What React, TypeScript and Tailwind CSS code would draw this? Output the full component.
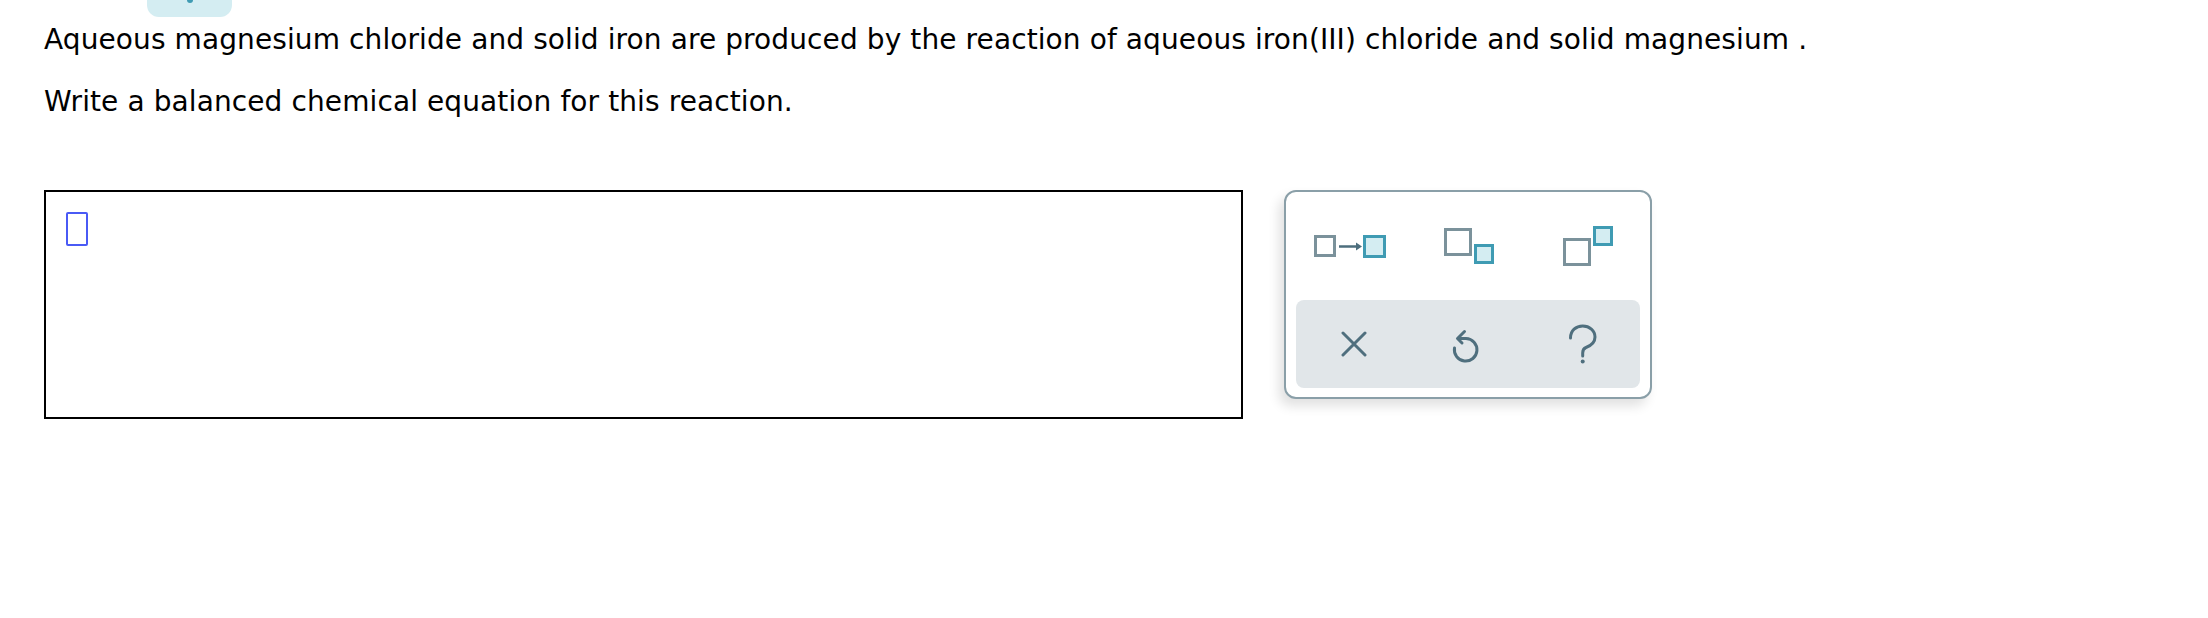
import React from "react";

const GRAY = "#7b929b";
const TEAL = "#3f9bb3";
const TEAL_FILL = "#d4edf2";
const ICON = "#4f6f7e";

function ArrowIcon() {
  return (
    <svg width="73" height="23" viewBox="0 0 73 23">
      <rect x="1.5" y="1.5" width="19" height="19" fill="none" stroke={GRAY} strokeWidth="3" />
      <line x1="25" y1="11.5" x2="43" y2="11.5" stroke="#4d6e7d" strokeWidth="2.5" />
      <polygon points="42,7.5 48,11.5 42,15.5" fill="#4d6e7d" />
      <rect x="50.5" y="1.5" width="20" height="20" fill={TEAL_FILL} stroke={TEAL} strokeWidth="3" />
    </svg>
  );
}

function SubscriptIcon() {
  return (
    <svg width="50" height="36" viewBox="0 0 50 36">
      <rect x="1.5" y="1.5" width="25" height="25" fill="none" stroke={GRAY} strokeWidth="3" />
      <rect x="31.5" y="17.5" width="17" height="17" fill={TEAL_FILL} stroke={TEAL} strokeWidth="3" />
    </svg>
  );
}

function SuperscriptIcon() {
  return (
    <svg width="50" height="40" viewBox="0 0 50 40">
      <rect x="31.5" y="1.5" width="17" height="17" fill={TEAL_FILL} stroke={TEAL} strokeWidth="3" />
      <rect x="1.5" y="13.5" width="25" height="25" fill="none" stroke={GRAY} strokeWidth="3" />
    </svg>
  );
}

function CloseIcon() {
  return (
    <svg width="26" height="26" viewBox="0 0 26 26">
      <path d="M2 2 L24 24 M24 2 L2 24" stroke={ICON} strokeWidth="3" strokeLinecap="round" fill="none" />
    </svg>
  );
}

function UndoIcon() {
  return (
    <svg width="60" height="52" viewBox="0 0 60 52">
      <path
        d="M16.5 30 A11.3 11.3 0 1 0 28 20.5 H20 M26.5 13.5 L19.5 20.5 L24 25"
        stroke={ICON}
        strokeWidth="3"
        strokeLinecap="round"
        strokeLinejoin="round"
        fill="none"
      />
    </svg>
  );
}

function HelpIcon() {
  return (
    <svg width="34" height="46" viewBox="0 0 34 46">
      <path
        d="M4.5 17 C4.5 9.5 10 5 16.7 5 C23.5 5 29 9.5 29 16 C29 22 24 25 20 26.5 C17.5 27.5 16.7 29 16.7 32 V35"
        stroke={ICON}
        strokeWidth="3"
        strokeLinecap="round"
        fill="none"
      />
      <circle cx="16.7" cy="40.5" r="2" fill={ICON} />
    </svg>
  );
}

export default function App() {
  return (
    <div className="min-h-[618px] bg-white pl-[44px] text-black font-['DejaVu_Sans',sans-serif]">
      {/* tab peeking at the top */}
      <div className="ml-[103px] flex h-[17px] w-[85px] justify-center rounded-b-[12px] bg-[#d4edf2]">
        <div className="h-[3px] w-[6px] rounded-b-full bg-[#3f9bb3]" />
      </div>

      <p className="mt-[7px] text-[28px] leading-[32px] tracking-[0.1px]">
        Aqueous magnesium chloride and solid iron are produced by the reaction of aqueous iron(III) chloride and solid magnesium .
      </p>
      <p className="mt-[30px] text-[28px] leading-[32px] tracking-[0.1px]">
        Write a balanced chemical equation for this reaction.
      </p>

      <div className="mt-[72px] flex items-start">
        {/* answer box */}
        <div className="h-[229px] w-[1199px] border-2 border-black pl-[20px] pt-[20px]">
          <div className="h-[34px] w-[22px] rounded-[2px] border-2 border-[#4a5af5]" />
        </div>

        {/* tool palette */}
        <div className="ml-[41px] flex h-[209px] w-[368px] flex-col rounded-[12px] border-2 border-[#8a9fa8] bg-white shadow-[-5px_7px_12px_rgba(0,0,0,0.12)]">
          <div className="grid h-[108px] grid-cols-3 items-center px-[10px]">
            <div className="flex justify-center pr-[6px]">
              <ArrowIcon />
            </div>
            <div className="flex justify-center pl-[2px]">
              <SubscriptIcon />
            </div>
            <div className="flex justify-center pl-[10px]">
              <SuperscriptIcon />
            </div>
          </div>
          <div className="mx-[10px] grid h-[88px] grid-cols-3 items-center rounded-[8px] bg-[#e1e6e9]">
            <div className="flex justify-center pl-[2px]">
              <CloseIcon />
            </div>
            <div className="flex justify-center">
              <UndoIcon />
            </div>
            <div className="flex justify-center">
              <HelpIcon />
            </div>
          </div>
        </div>
      </div>
    </div>
  );
}
